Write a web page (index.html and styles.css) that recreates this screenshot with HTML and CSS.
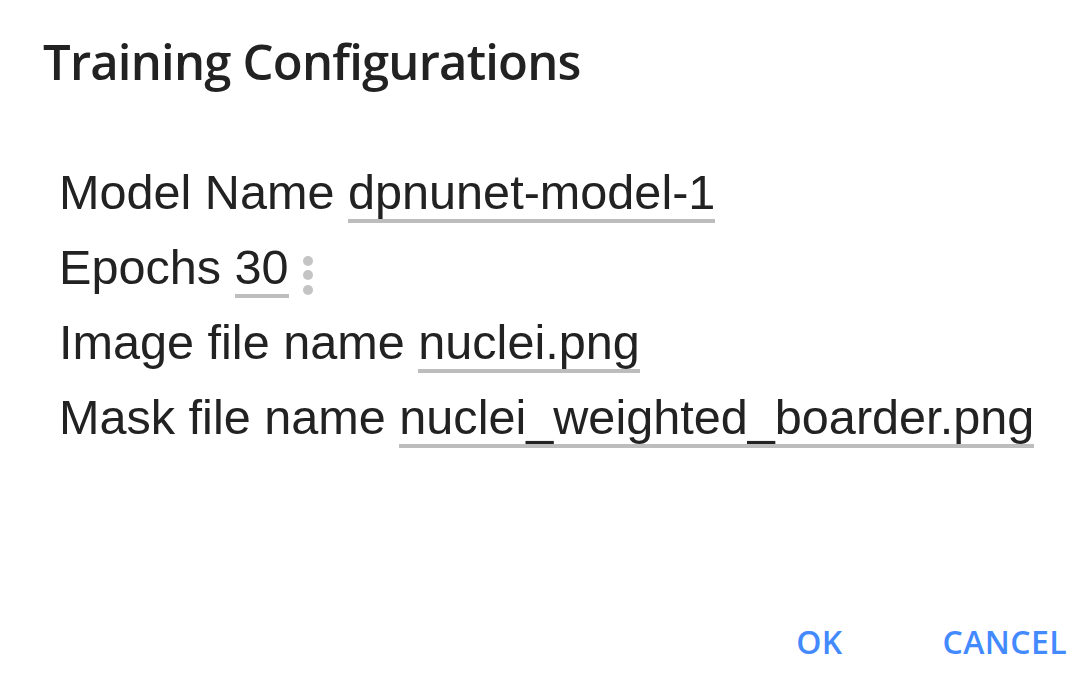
FILE: index.html
```html
<!DOCTYPE html>
<html lang="en">
<head>
<meta charset="utf-8">
<title>Training Configurations</title>
<link rel="stylesheet" href="styles.css">
</head>
<body>
<div class="dialog">
  <h2 class="title">Training Configurations</h2>
  <div class="content">
    <div class="row">Model Name <span class="field">dpnunet-model-1</span></div>
    <div class="row">Epochs <span class="field">30</span><svg class="spin" width="12" height="44" viewBox="0 0 12 44" aria-hidden="true"><circle cx="6" cy="6" r="5"/><circle cx="6" cy="20" r="5"/><circle cx="6" cy="35" r="5"/></svg></div>
    <div class="row">Image file name <span class="field">nuclei.png</span></div>
    <div class="row">Mask file name <span class="field">nuclei_weighted_boarder.png</span></div>
  </div>
  <div class="actions">
    <button class="btn">OK</button>
    <button class="btn">CANCEL</button>
  </div>
</div>
</body>
</html>
```

FILE: styles.css
```css
html, body {
  margin: 0;
  padding: 0;
  background: #ffffff;
}

.dialog {
  box-sizing: border-box;
  width: 1091px;
  height: 687px;
  display: flex;
  flex-direction: column;
  padding: 31px 24px 27px 0;
}

.title {
  margin: 0 0 0 43px;
  font-family: "Open Sans", "Noto Sans", sans-serif;
  font-weight: 600;
  font-size: 49px;
  letter-spacing: -0.8px;
  line-height: 60px;
  color: #222222;
}

.content {
  margin-top: 64px;
  padding-left: 59px;
  font-family: "Liberation Sans", Arial, sans-serif;
  font-size: 48.6px;
  color: #222222;
}

.row {
  line-height: 75px;
  height: 75px;
  white-space: nowrap;
}

.field {
  border-bottom: 4px solid #bdbdbd;
}

.spin {
  fill: #c4c4c4;
  margin-left: 13px;
  vertical-align: -15px;
}

.actions {
  margin-top: auto;
  display: flex;
  justify-content: flex-end;
  gap: 100px;
}

.btn {
  border: 0;
  background: none;
  padding: 0;
  font-family: "Open Sans", "Noto Sans", sans-serif;
  font-weight: 600;
  font-size: 32px;
  letter-spacing: 0.4px;
  line-height: 36px;
  color: #448aff;
  cursor: pointer;
}
```
